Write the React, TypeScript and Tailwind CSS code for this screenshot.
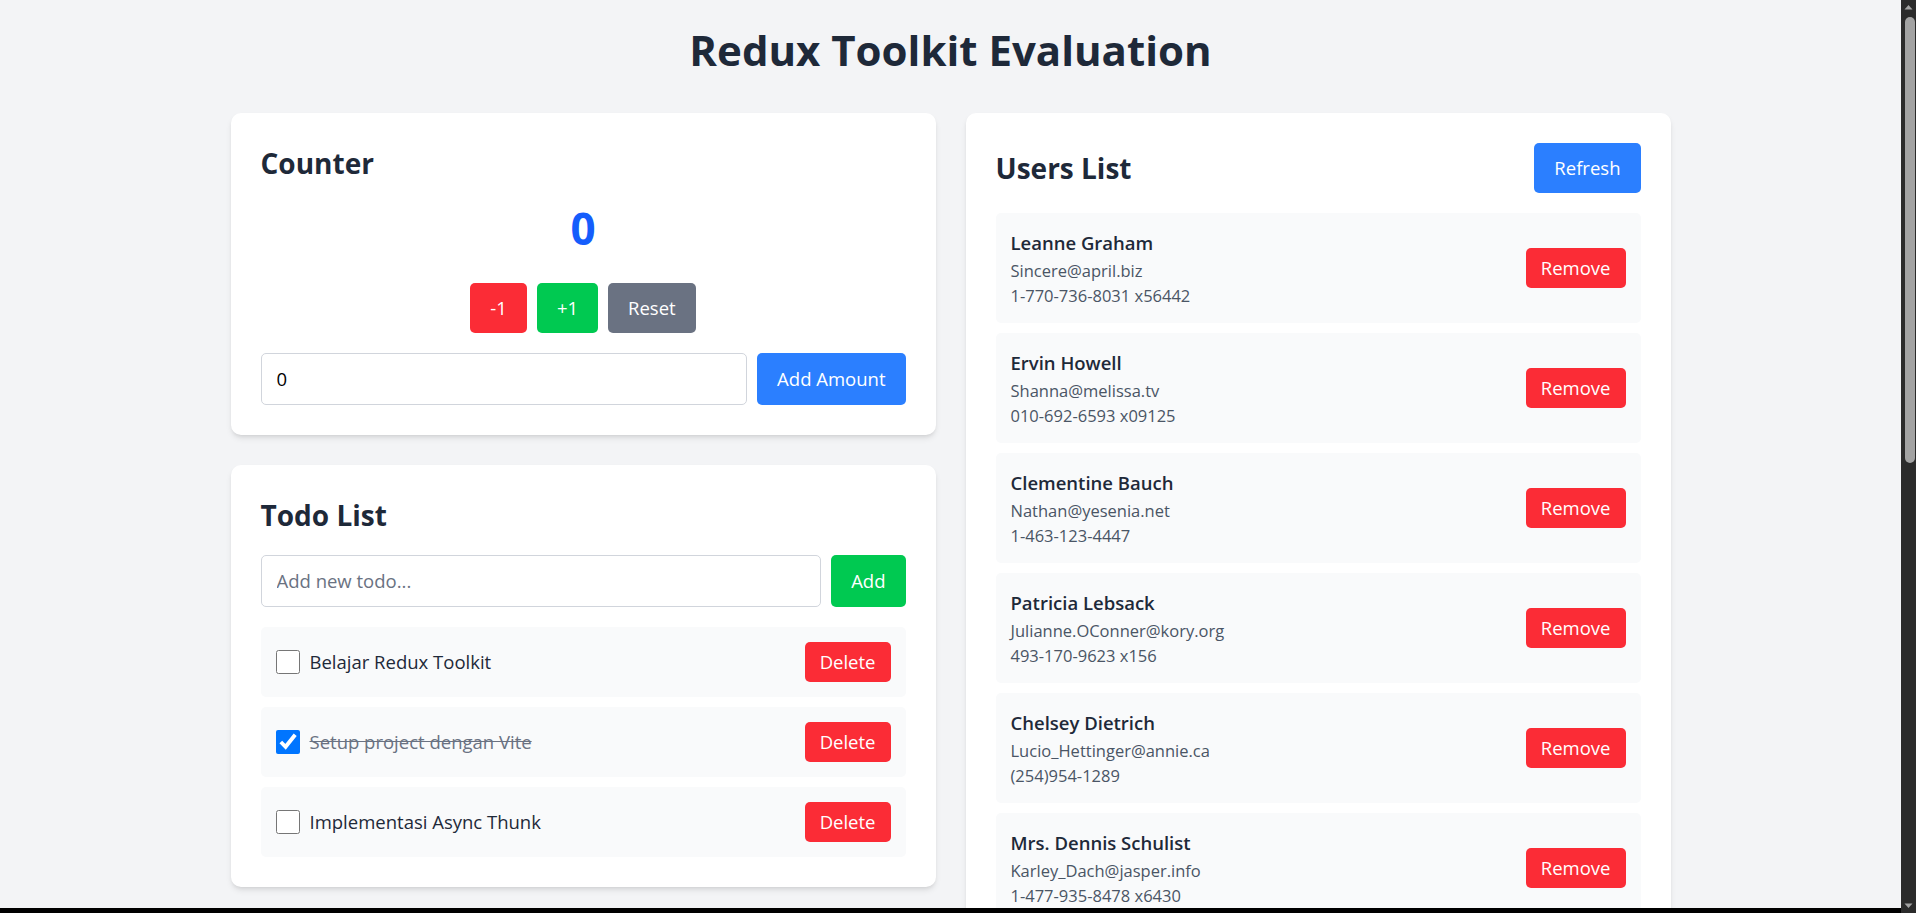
import { useState } from "react";

const users = [
  { id: 1, name: "Leanne Graham", email: "Sincere@april.biz", phone: "1-770-736-8031 x56442" },
  { id: 2, name: "Ervin Howell", email: "Shanna@melissa.tv", phone: "010-692-6593 x09125" },
  { id: 3, name: "Clementine Bauch", email: "Nathan@yesenia.net", phone: "1-463-123-4447" },
  { id: 4, name: "Patricia Lebsack", email: "Julianne.OConner@kory.org", phone: "493-170-9623 x156" },
  { id: 5, name: "Chelsey Dietrich", email: "Lucio_Hettinger@annie.ca", phone: "(254)954-1289" },
  { id: 6, name: "Mrs. Dennis Schulist", email: "Karley_Dach@jasper.info", phone: "1-477-935-8478 x6430" },
  { id: 7, name: "Kurtis Weissnat", email: "Telly.Hoeger@billy.biz", phone: "210.067.6132" },
  { id: 8, name: "Nicholas Runolfsdottir V", email: "Sherwood@rosamond.me", phone: "586.493.6943 x140" },
  { id: 9, name: "Glenna Reichert", email: "Chaim_McDermott@dana.io", phone: "(775)976-6794 x41206" },
  { id: 10, name: "Clementina DuBuque", email: "Rey.Padberg@karina.biz", phone: "024-648-3804" },
];

const initialTodos = [
  { id: 1, text: "Belajar Redux Toolkit", done: false },
  { id: 2, text: "Setup project dengan Vite", done: true },
  { id: 3, text: "Implementasi Async Thunk", done: false },
];

function Counter() {
  const [count, setCount] = useState(0);
  const [amount, setAmount] = useState("0");

  return (
    <div className="bg-white rounded-[10px] shadow-md p-7.5">
      <h2 className="text-[28px] leading-10 font-bold text-gray-800 mb-5">Counter</h2>
      <div className="text-center text-[44px] leading-[50px] font-bold text-blue-600 mb-7.5">{count}</div>
      <div className="flex justify-center gap-2.5 mb-5">
        <button onClick={() => setCount(count - 1)} className="bg-red-500 text-white px-5 py-2.5 rounded-[5px]">
          -1
        </button>
        <button onClick={() => setCount(count + 1)} className="bg-green-500 text-white px-5 py-2.5 rounded-[5px]">
          +1
        </button>
        <button onClick={() => setCount(0)} className="bg-gray-500 text-white px-5 py-2.5 rounded-[5px]">
          Reset
        </button>
      </div>
      <div className="flex gap-2.5">
        <input
          type="number"
          value={amount}
          onChange={(e) => setAmount(e.target.value)}
          className="flex-1 border border-gray-300 rounded-[5px] px-[15px] py-2.5 text-black outline-none"
        />
        <button
          onClick={() => setCount(count + (Number(amount) || 0))}
          className="bg-blue-500 text-white px-5 py-2.5 rounded-[5px]"
        >
          Add Amount
        </button>
      </div>
    </div>
  );
}

function TodoList() {
  const [todos, setTodos] = useState(initialTodos);
  const [text, setText] = useState("");

  const addTodo = () => {
    if (!text.trim()) return;
    setTodos([...todos, { id: Date.now(), text, done: false }]);
    setText("");
  };

  return (
    <div className="bg-white rounded-[10px] shadow-md p-7.5">
      <h2 className="text-[28px] leading-10 font-bold text-gray-800 mb-5">Todo List</h2>
      <div className="flex gap-2.5 mb-5">
        <input
          value={text}
          onChange={(e) => setText(e.target.value)}
          placeholder="Add new todo..."
          className="flex-1 border border-gray-300 rounded-[5px] px-[15px] py-2.5 placeholder:text-gray-500 outline-none"
        />
        <button onClick={addTodo} className="bg-green-500 text-white px-5 py-2.5 rounded-[5px]">
          Add
        </button>
      </div>
      <div className="flex flex-col gap-2.5">
        {todos.map((todo) => (
          <div key={todo.id} className="flex items-center justify-between bg-gray-50 rounded-[5px] p-[15px]">
            <div className="flex items-center gap-2.5">
              <input
                type="checkbox"
                checked={todo.done}
                onChange={() =>
                  setTodos(todos.map((t) => (t.id === todo.id ? { ...t, done: !t.done } : t)))
                }
                className="w-6 h-6 m-0"
              />
              <span className={todo.done ? "line-through text-gray-500" : "text-gray-800"}>{todo.text}</span>
            </div>
            <button
              onClick={() => setTodos(todos.filter((t) => t.id !== todo.id))}
              className="bg-red-500 text-white px-[15px] py-[5px] rounded-[5px]"
            >
              Delete
            </button>
          </div>
        ))}
      </div>
    </div>
  );
}

function UsersList() {
  const [list, setList] = useState(users);

  return (
    <div className="bg-white rounded-[10px] shadow-md p-7.5">
      <div className="flex items-center justify-between mb-5">
        <h2 className="text-[28px] leading-10 font-bold text-gray-800">Users List</h2>
        <button onClick={() => setList(users)} className="bg-blue-500 text-white px-5 py-2.5 rounded-[5px]">
          Refresh
        </button>
      </div>
      <div className="flex flex-col gap-2.5">
        {list.map((user) => (
          <div key={user.id} className="flex items-center justify-between bg-gray-50 rounded-[5px] p-[15px]">
            <div>
              <p className="font-semibold text-gray-800">{user.name}</p>
              <p className="text-[16.5px] leading-[25px] text-gray-600">{user.email}</p>
              <p className="text-[16.5px] leading-[25px] text-gray-600">{user.phone}</p>
            </div>
            <button
              onClick={() => setList(list.filter((u) => u.id !== user.id))}
              className="bg-red-500 text-white px-[15px] py-[5px] rounded-[5px]"
            >
              Remove
            </button>
          </div>
        ))}
      </div>
    </div>
  );
}

function Scrollbar() {
  return (
    <div className="w-[15px] shrink-0 h-full bg-[#2b2b2b] flex flex-col items-center">
      <svg width="15" height="15" viewBox="0 0 15 15" className="shrink-0">
        <path d="M3.5 9.5 L7.5 5 L11.5 9.5 Z" fill="#a3a3a3" />
      </svg>
      <div className="w-[10px] h-[446px] mt-[2px] rounded-[5px] bg-[#a3a3a3] ml-[2px]" />
      <div className="flex-1" />
      <svg width="15" height="15" viewBox="0 0 15 15" className="shrink-0">
        <path d="M3.5 5.5 L7.5 10 L11.5 5.5 Z" fill="#a3a3a3" />
      </svg>
    </div>
  );
}

export default function App() {
  return (
    <div className="h-screen flex bg-black overflow-hidden">
      <div className="flex-1 flex flex-col min-w-0">
        <div className="h-[908px] shrink-0 overflow-y-auto [scrollbar-width:none] bg-gray-100 font-['Open_Sans',sans-serif] text-[18.5px] leading-[30px]">
          <div className="max-w-[1440px] mx-auto pt-[25px] pb-5">
            <h1 className="text-[42px] leading-[50px] font-bold text-center text-gray-800 mb-9.5">
              Redux Toolkit Evaluation
            </h1>
            <div className="grid grid-cols-2 gap-7.5 items-start">
              <div className="flex flex-col gap-7.5">
                <Counter />
                <TodoList />
              </div>
              <UsersList />
            </div>
          </div>
        </div>
      </div>
      <Scrollbar />
    </div>
  );
}
